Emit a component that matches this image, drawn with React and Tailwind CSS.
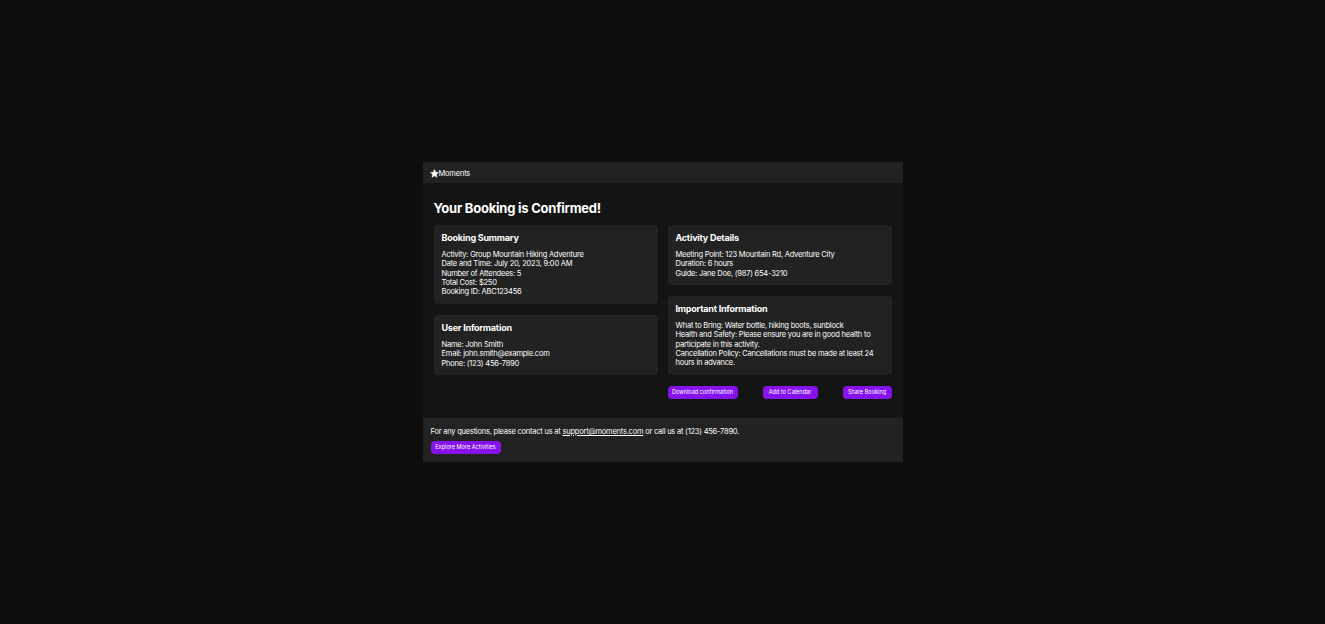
import React from "react";

function Card({ title, lines, className = "" }) {
  return (
    <div className={`rounded-[4px] bg-[#222222] px-2 pt-[6px] ${className}`}>
      <h2 className="mb-[5px] text-[9px] font-bold leading-[14px] tracking-[-0.22px] text-white">{title}</h2>
      <div className="text-[7.5px] font-normal leading-[9.3px] tracking-[-0.22px] text-white">
        {lines.map((l) => (
          <p key={l}>{l}</p>
        ))}
      </div>
    </div>
  );
}

function Btn({ children, className = "" }) {
  return (
    <button className={`flex h-[13px] items-center justify-center rounded-[4px] bg-[#8612ec] text-[5.5px] leading-none tracking-[0.03px] text-white ${className}`}>
      {children}
    </button>
  );
}

export default function App() {
  return (
    <div className="flex h-[624px] w-full items-center justify-center overflow-hidden bg-[#0e0e0e] font-['Inter','Liberation_Sans',sans-serif] antialiased">
      <div className="flex h-[300px] w-[480px] flex-col bg-[#141414]">
        <header className="flex h-[21px] items-center bg-[#222222] pl-[7px] text-[7.5px] tracking-[-0.2px] text-white">
          <svg width="9" height="9" viewBox="0 0 24 24" fill="white" className="mt-[2px]">
            <path d="M12 1.5l3.2 7 7.3.8-5.4 5 1.5 7.4L12 18l-6.6 3.7 1.5-7.4-5.4-5 7.3-.8z" stroke="white" strokeWidth="1.5" strokeLinejoin="round" />
          </svg>
          <span className="mt-[2px]">Moments</span>
        </header>
        <main className="flex-1 px-[11px] pt-[16px]">
          <h1 className="mb-[8px] text-[13px] font-bold leading-[18px] tracking-[-0.23px] text-white">Your Booking is Confirmed!</h1>
          <div className="grid grid-cols-2 gap-x-[10px]">
            <div className="flex flex-col gap-[11px]">
              <Card
                title="Booking Summary"
                className="h-[79px]"
                lines={[
                  "Activity: Group Mountain Hiking Adventure",
                  "Date and Time: July 20, 2023, 9:00 AM",
                  "Number of Attendees: 5",
                  "Total Cost: $250",
                  "Booking ID: ABC123456",
                ]}
              />
              <Card
                title="User Information"
                className="h-[60px]"
                lines={["Name: John Smith", "Email: john.smith@example.com", "Phone: (123) 456-7890"]}
              />
            </div>
            <div className="flex flex-col gap-[11px]">
              <Card
                title="Activity Details"
                className="h-[60px]"
                lines={["Meeting Point: 123 Mountain Rd, Adventure City", "Duration: 6 hours", "Guide: Jane Doe, (987) 654-3210"]}
              />
              <Card
                title="Important Information"
                className="h-[79px]"
                lines={[
                  "What to Bring: Water bottle, hiking boots, sunblock",
                  "Health and Safety: Please ensure you are in good health to participate in this activity.",
                  "Cancellation Policy: Cancellations must be made at least 24 hours in advance.",
                ]}
              />
              <div className="flex justify-between">
                <Btn className="w-[70px]">Download confirmation</Btn>
                <Btn className="w-[55px]">Add to Calendar</Btn>
                <Btn className="w-[49px]">Share Booking</Btn>
              </div>
            </div>
          </div>
        </main>
        <footer className="h-[44px] bg-[#222222] px-[8px] pt-[9px]">
          <p className="text-[7.5px] font-normal leading-[10px] tracking-[-0.22px] text-white">
            For any questions, please contact us at <span className="underline">support@moments.com</span> or call us at (123) 456-7890.
          </p>
          <Btn className="mt-[4px] w-[70px]">Explore More Activities</Btn>
        </footer>
      </div>
    </div>
  );
}
